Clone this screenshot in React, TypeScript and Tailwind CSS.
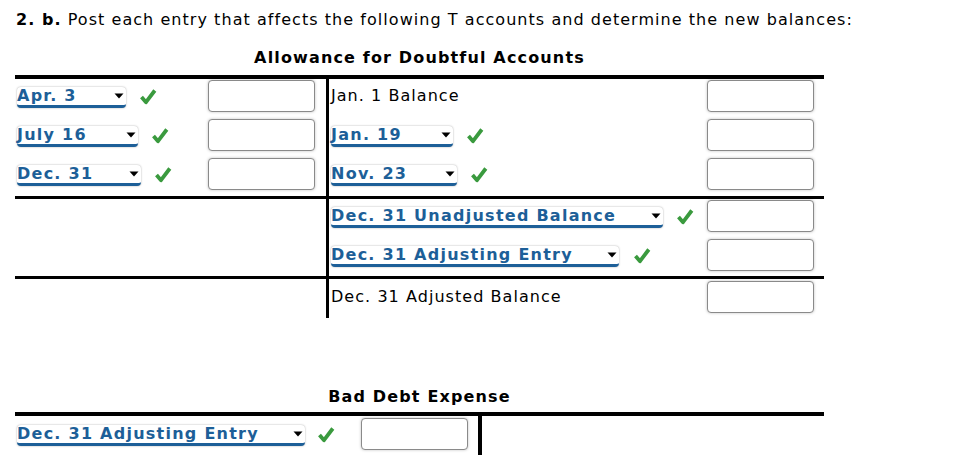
import React from 'react';

const Check = () => (
  <svg width="18" height="17" viewBox="0 0 18 17" className="shrink-0">
    <path d="M2.5 9 L7 14.2 L15.8 2.5" fill="none" stroke="#3a9a3e" strokeWidth="3.8" strokeLinejoin="round" />
  </svg>
);

const Caret = () => (
  <svg width="10" height="6" viewBox="0 0 10 6" className="shrink-0">
    <path d="M0.5 0.5 H9.5 L5 5.5 Z" fill="#000" />
  </svg>
);

const Picker = ({ label, width, gap = 'ml-[13px]' }: { label: string; width: string; gap?: string }) => (
  <div className="flex items-center">
    <div
      className={`flex items-center justify-between h-[21px] mt-[2px] bg-white rounded-[4px] shadow-[0_0_2px_rgba(0,0,0,0.35)] border-b-[3px] border-[#1d5f98] pr-[2px] ${width}`}
    >
      <span className="font-bold text-[#1d5f98] leading-[18px] tracking-[1.25px] whitespace-nowrap">{label}</span>
      <Caret />
    </div>
    <div className={gap}>
      <Check />
    </div>
  </div>
);

const Box = () => (
  <div className="w-[107px] h-[32px] shrink-0 bg-white rounded-[4px] border border-[#8a8a8a] shadow-[0_0_3px_rgba(0,0,0,0.25)]" />
);

const Row = ({ children }: { children?: React.ReactNode }) => (
  <div className="flex items-center justify-between h-[39px] pt-[1px] pb-[6px]">{children}</div>
);

export default function App() {
  return (
    <div className="w-[957px] h-[460px] overflow-hidden bg-white text-black text-[16px] tracking-[1.05px] font-['DejaVu_Sans','Noto_Sans',sans-serif]">
      <p className="pl-[16px] pt-[8px] leading-[24px] whitespace-nowrap">
        <b>2. b.</b> Post each entry that affects the following T accounts and determine the new balances:
      </p>

      <div className="ml-[15px] w-[809px]">
        {/* Allowance T account */}
        <div className="mt-[14px] mb-[5px] text-center font-bold leading-[24px] tracking-[1.15px]">Allowance for Doubtful Accounts</div>
        <div className="border-t-[4px] border-black">
          <div className="flex">
            <div className="w-[314px] border-r-[3px] border-black pl-[2px] pr-[11px]">
              <Row>
                <Picker label="Apr. 3" width="w-[109px]" />
                <Box />
              </Row>
              <Row>
                <Picker label="July 16" width="w-[121px]" />
                <Box />
              </Row>
              <Row>
                <Picker label="Dec. 31" width="w-[124px]" />
                <Box />
              </Row>
            </div>
            <div className="flex-1 pl-[2px] pr-[10px]">
              <Row>
                <span className="leading-[24px]">Jan. 1 Balance</span>
                <Box />
              </Row>
              <Row>
                <Picker label="Jan. 19" width="w-[122px]" />
                <Box />
              </Row>
              <Row>
                <Picker label="Nov. 23" width="w-[126px]" />
                <Box />
              </Row>
            </div>
          </div>

          <div className="flex border-t-[3px] border-black">
            <div className="w-[314px] border-r-[3px] border-black" />
            <div className="flex-1 pl-[2px] pr-[10px]">
              <Row>
                <Picker label="Dec. 31 Unadjusted Balance" width="w-[332px]" />
                <Box />
              </Row>
              <div className="flex items-center justify-between h-[38px] pt-[1px] pb-[5px]">
                <Picker label="Dec. 31 Adjusting Entry" width="w-[288px]" gap="ml-[14px]" />
                <Box />
              </div>
            </div>
          </div>

          <div className="flex border-t-[3px] border-black">
            <div className="w-[314px] border-r-[3px] border-black" />
            <div className="flex-1 pl-[2px] pr-[10px]">
              <div className="flex items-center justify-between h-[39px] pt-[2px] pb-[5px]">
                <span className="leading-[24px]">Dec. 31 Adjusted Balance</span>
                <Box />
              </div>
            </div>
          </div>
        </div>

        {/* Bad Debt Expense T account */}
        <div className="mt-[67px] mb-[3px] text-center font-bold leading-[24px] tracking-[1.15px]">Bad Debt Expense</div>
        <div className="flex border-t-[4px] border-black">
          <div className="w-[467px] border-r-[4px] border-black pl-[2px] pr-[10px]">
            <div className="flex items-center justify-between h-[39px] pt-[2px] pb-[5px]">
              <Picker label="Dec. 31 Adjusting Entry" width="w-[288px]" gap="ml-[12px]" />
              <Box />
            </div>
          </div>
          <div className="flex-1" />
        </div>
      </div>
    </div>
  );
}
